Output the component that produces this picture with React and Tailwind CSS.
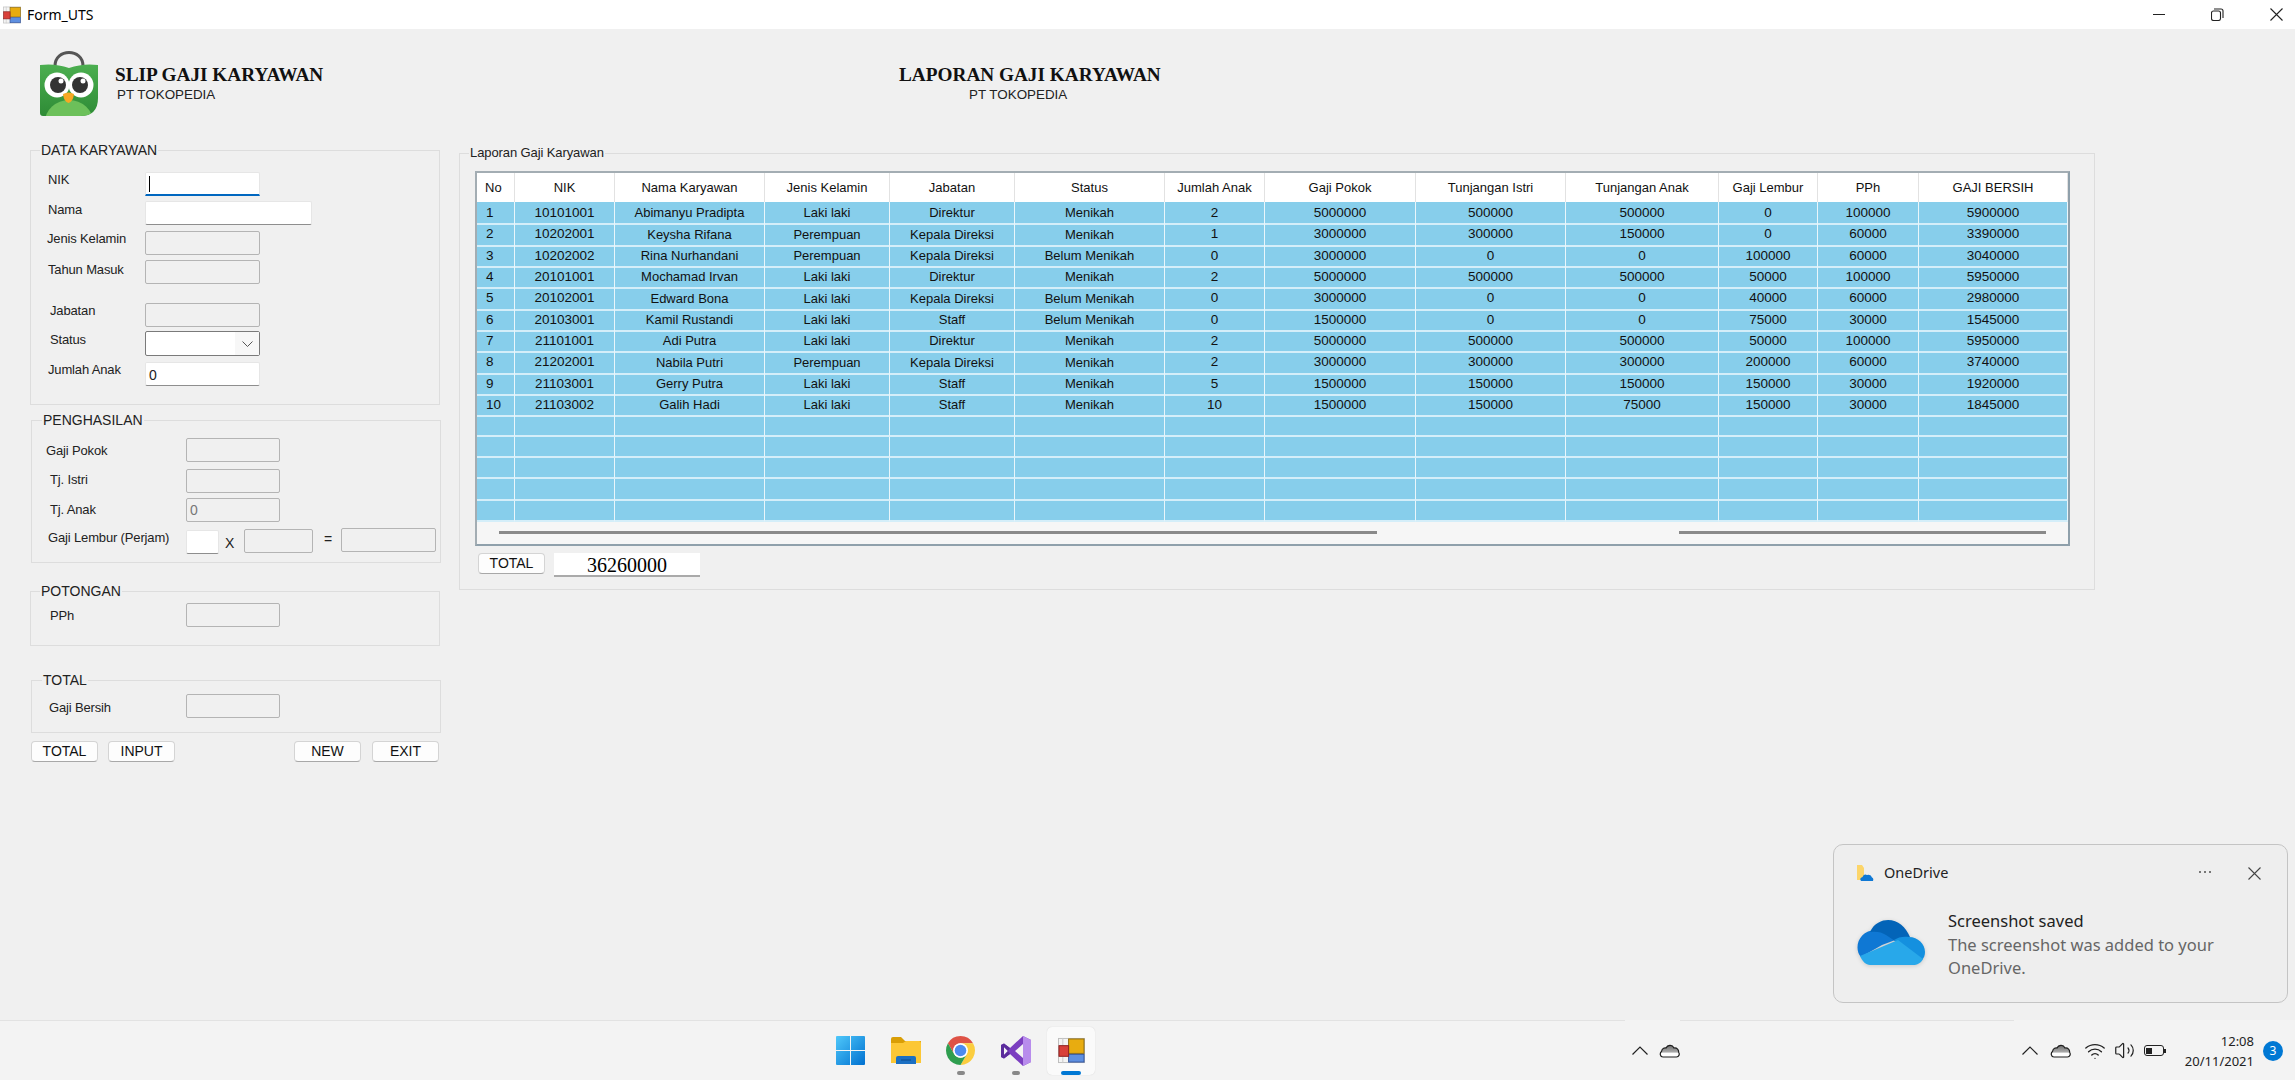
import React from "react";
import { Wifi, Volume2 } from "lucide-react";

const rows = [
  ["1","10101001","Abimanyu Pradipta","Laki laki","Direktur","Menikah","2","5000000","500000","500000","0","100000","5900000"],
  ["2","10202001","Keysha Rifana","Perempuan","Kepala Direksi","Menikah","1","3000000","300000","150000","0","60000","3390000"],
  ["3","10202002","Rina Nurhandani","Perempuan","Kepala Direksi","Belum Menikah","0","3000000","0","0","100000","60000","3040000"],
  ["4","20101001","Mochamad Irvan","Laki laki","Direktur","Menikah","2","5000000","500000","500000","50000","100000","5950000"],
  ["5","20102001","Edward Bona","Laki laki","Kepala Direksi","Belum Menikah","0","3000000","0","0","40000","60000","2980000"],
  ["6","20103001","Kamil Rustandi","Laki laki","Staff","Belum Menikah","0","1500000","0","0","75000","30000","1545000"],
  ["7","21101001","Adi Putra","Laki laki","Direktur","Menikah","2","5000000","500000","500000","50000","100000","5950000"],
  ["8","21202001","Nabila Putri","Perempuan","Kepala Direksi","Menikah","2","3000000","300000","300000","200000","60000","3740000"],
  ["9","21103001","Gerry Putra","Laki laki","Staff","Menikah","5","1500000","150000","150000","150000","30000","1920000"],
  ["10","21103002","Galih Hadi","Laki laki","Staff","Menikah","10","1500000","150000","75000","150000","30000","1845000"],
  ...Array.from({ length: 5 }, () => Array(13).fill("")),
];
const headers = ["No","NIK","Nama Karyawan","Jenis Kelamin","Jabatan","Status","Jumlah Anak","Gaji Pokok","Tunjangan Istri","Tunjangan Anak","Gaji Lembur","PPh","GAJI BERSIH"];
const gridCols = "grid grid-cols-[38px_100px_150px_125px_125px_150px_100px_151px_150px_153px_99px_101px_149px]";
const mixedCols = [2, 3, 4, 5];

function Group({ title, className, legendClass = "ml-[9px] text-[14px]", children }) {
  return (
    <fieldset className={`border border-[#dddddd] ${className}`}>
      <legend className={`${legendClass} px-px h-[18px] leading-[18px] text-[#222222]`}>{title}</legend>
      {children}
    </fieldset>
  );
}

const Off = ({ className = "w-[94px]", children }) => (
  <div className={`h-[24px] shrink-0 rounded-[2px] border border-[#b4b4b4] bg-[#f0f0f0] pl-[3px] leading-[22px] text-[#777777] ${className}`}>{children}</div>
);
const On = ({ className = "w-[115px]", children }) => (
  <div className={`h-[24px] shrink-0 rounded-[2px] border border-[#e6e6e6] border-b-[#8e8e8e] bg-white pl-[3px] leading-[24px] text-[#222222] ${className}`}>{children}</div>
);

function Row({ label, mt, lc, children }) {
  return (
    <div className={`flex h-[24px] ${mt}`}>
      <span className={`shrink-0 text-[13px] leading-[18px] tracking-[-0.150px] whitespace-nowrap text-[#222222] ${lc}`}>{label}</span>
      {children}
    </div>
  );
}

const Btn = ({ className, children }) => (
  <div className={`flex h-[21px] w-[67px] items-center justify-center rounded-[4px] border border-[#d4d4d4] border-b-[#a8a8a8] bg-[#fdfdfd] text-[#111111] ${className}`}>{children}</div>
);

function Logo() {
  return (
    <svg width="58" height="66" viewBox="0 0 58 66" className="shrink-0">
      <defs>
        <linearGradient id="bagG" x1="0" y1="0" x2="0" y2="1">
          <stop offset="0" stopColor="#4caf50" />
          <stop offset="1" stopColor="#2e8b36" />
        </linearGradient>
        <clipPath id="bagC">
          <path d="M0 15Q15 13 29 18Q43 13 58 15L58 48Q58 66 40 66L3 66Q0 66 0 63Z" />
        </clipPath>
      </defs>
      <path d="M15 16C15 -2 43 -2 43 16" fill="none" stroke="#555555" strokeWidth="3" />
      <path d="M0 15Q15 13 29 18Q43 13 58 15L58 48Q58 66 40 66L3 66Q0 66 0 63Z" fill="url(#bagG)" />
      <g clipPath="url(#bagC)">
        <ellipse cx="29" cy="72" rx="24" ry="22" fill="#6cc05a" />
      </g>
      <circle cx="17" cy="35" r="12.500" fill="#ffffff" />
      <circle cx="41" cy="35" r="12.500" fill="#ffffff" />
      <circle cx="18" cy="35" r="8" fill="#333333" />
      <circle cx="40" cy="35" r="8" fill="#333333" />
      <circle cx="21" cy="31" r="2.500" fill="#ffffff" />
      <circle cx="43" cy="31" r="2.500" fill="#ffffff" />
      <path d="M23 44Q28.500 41 34 44Q33 52 28.500 53Q24 52 23 44Z" fill="#f7a823" />
    </svg>
  );
}

function AppIcon({ size = 18 }) {
  return (
    <svg width={size} height={size} viewBox="0 0 28 26">
      <rect x="0.500" y="0.500" width="27" height="25" fill="#f4f4f4" stroke="#bdbdbd" />
      <path d="M0 8H11M0 19H11M5 0V26M11 0V26" stroke="#c8c8c8" />
      <rect x="11" y="1" width="16" height="15" fill="#e8ac10" stroke="#8c6a10" />
      <rect x="11" y="17" width="16" height="8" fill="#5e8fe0" stroke="#33549a" />
      <rect x="1" y="8" width="10" height="11" fill="#d8403a" stroke="#8f2020" />
    </svg>
  );
}

function WinLogo() {
  return (
    <svg width="29" height="29" viewBox="0 0 29 29">
      <defs>
        <linearGradient id="winG" x1="0" y1="0" x2="1" y2="1">
          <stop offset="0" stopColor="#4fc8fa" />
          <stop offset="1" stopColor="#0070d0" />
        </linearGradient>
      </defs>
      <path d="M0 1Q0 0 1 0H14V14H0ZM15 0H28Q29 0 29 1V14H15ZM0 15H14V29H1Q0 29 0 28ZM15 15H29V28Q29 29 28 29H15Z" fill="url(#winG)" />
    </svg>
  );
}

function Folder() {
  return (
    <svg width="30" height="27" viewBox="0 0 30 27">
      <path d="M0 2Q0 0 2 0H10L14 4H30V8H0Z" fill="#d99e06" />
      <path d="M0 6H12L15 4H28Q30 4 30 6V26H0Z" fill="#fcc735" />
      <path d="M5 21Q5 19 7 19H23Q25 19 25 21V27H5Z" fill="#1b6fc2" />
      <path d="M10 23H20" stroke="#0b4a8c" strokeWidth="1" />
    </svg>
  );
}

function Chrome() {
  return (
    <svg width="29" height="29" viewBox="4 4 40 40">
      <path d="M24 4A20 20 0 0 1 41.320 14L24 14A10 10 0 0 0 15.340 29L6.680 14A20 20 0 0 1 24 4Z" fill="#de5246" />
      <path d="M41.320 14A20 20 0 0 1 24 44L32.660 29A10 10 0 0 0 24 14Z" fill="#fbcd3f" />
      <path d="M6.680 14L15.340 29A10 10 0 0 0 32.660 29L24 44A20 20 0 0 1 6.680 14Z" fill="#2f9e4f" />
      <circle cx="24" cy="24" r="10" fill="#ffffff" />
      <circle cx="24" cy="24" r="8" fill="#4c8bf0" />
    </svg>
  );
}

function VS() {
  return (
    <svg width="30" height="30" viewBox="0 0 30 30">
      <path fillRule="evenodd" d="M22 0L30 4V26L22 30L9 18L3 22.500L0 21V9L3 7.500L9 12ZM22 8L14 15L22 22ZM3 11V19L7 15Z" fill="#7b3ec0" />
      <path d="M22 0L30 4V26L22 30V22V8Z" fill="#b88cec" />
      <path fillRule="evenodd" d="M3 7.500L0 9V21L3 22.500L9 18L7 15L3 19V11L7 15L9 12Z" fill="#5b2c9c" />
    </svg>
  );
}

function BigCloud() {
  return (
    <svg width="69" height="45" viewBox="0 0 69 45" className="shrink-0 drop-shadow-sm">
      <path d="M5 37C-3 28 3 10 20 10C24 10 28 11 32 14L42 19L26 25Z" fill="#0f78d4" />
      <path d="M14 12C18 3 26 0 32 0C42 0 50 7 54 17L42 23L30 15C26 12 20 11 14 12Z" fill="#0364b8" />
      <path d="M38 20C42 17 48 16 53 17C62 17 69 24 69 32C69 35 68 38 66 40L50 30Z" fill="#1490df" />
      <path d="M4 36L42 20L67 39C65 43 61 45 57 45L14 45C10 45 6 41 4 36Z" fill="#28a8ea" />
    </svg>
  );
}

function SmallOneDrive() {
  return (
    <svg width="18" height="18" viewBox="0 0 18 18" className="shrink-0">
      <path d="M1 1H6L8 4V16H1Z" fill="#fcd56a" />
      <path d="M5 17Q3 14 6.500 13Q8 9.500 11 11Q15 10 16 13.500Q18 14.500 17 17Z" fill="#0f78d4" />
    </svg>
  );
}

function TrayCloud() {
  return (
    <svg width="21" height="14" viewBox="0 0 21 14" className="shrink-0">
      <defs>
        <linearGradient id="trayG" x1="0" y1="0" x2="0" y2="1">
          <stop offset="0" stopColor="#6e6e6e" />
          <stop offset="0.550" stopColor="#a8a8a8" />
          <stop offset="0.700" stopColor="#ffffff" />
        </linearGradient>
      </defs>
      <path d="M4 13C1 13 0.500 9 2.500 7.500C3 4 6 3.500 7 4C8.500 1 13 0 15 4C18 3.500 20 6 19.500 8C21 10 20 13 17.500 13Z" fill="url(#trayG)" stroke="#1c1c1c" strokeWidth="1.200" />
    </svg>
  );
}

const Chevron = () => (
  <svg width="16" height="9" viewBox="0 0 16 9" className="shrink-0">
    <path d="M0.500 8.500L8 1L15.500 8.500" fill="none" stroke="#222222" strokeWidth="1.200" />
  </svg>
);

const Cross = ({ size = 13, color = "#444444" }) => (
  <svg width={size} height={size} viewBox="0 0 13 13" className="shrink-0">
    <path d="M0.500 0.500L12.500 12.500M12.500 0.500L0.500 12.500" stroke={color} strokeWidth="1.100" fill="none" />
  </svg>
);

function Notification() {
  return (
    <div className="absolute left-[1833px] top-[844px] h-[159px] w-[455px] rounded-[10px] border border-[#c4c4c4] bg-[#eeeeee] font-['Noto_Sans',sans-serif]">
      <div className="mt-[18px] flex h-[20px] items-center pl-[22px]">
        <SmallOneDrive />
        <span className="ml-[10px] text-[14.500px] text-[#222222]">OneDrive</span>
        <span className="mb-[2px] ml-[251px] flex gap-[3px]">
          <i className="size-[2px] bg-[#777777]" />
          <i className="size-[2px] bg-[#777777]" />
          <i className="size-[2px] bg-[#777777]" />
        </span>
        <span className="ml-[37px] flex">
          <Cross />
        </span>
      </div>
      <div className="mt-[26px] flex pl-[22px]">
        <div className="mt-[11px]">
          <BigCloud />
        </div>
        <div className="ml-[23px] text-[16.500px] leading-[23.500px]">
          <div className="text-[#222222]">Screenshot saved</div>
          <div className="w-[300px] text-[#666666]">The screenshot was added to your OneDrive.</div>
        </div>
      </div>
    </div>
  );
}

function Taskbar() {
  return (
    <footer className="flex h-[60px] shrink-0 flex-col bg-[#f3f3f3]">
      <div className="flex h-px shrink-0">
        <div className="w-[1625px] bg-[#e2e2e2]" />
        <div className="w-[55px]" />
        <div className="w-[334px] bg-[#e2e2e2]" />
      </div>
      <div className="flex flex-1 items-center pl-[823px] pr-[12px]">
        <div className="flex w-[55px] justify-center"><WinLogo /></div>
        <div className="flex w-[55px] justify-center"><Folder /></div>
        <div className="relative flex w-[55px] justify-center">
          <Chrome />
          <i className="absolute bottom-[-10px] left-[24px] h-[4px] w-[8px] rounded-full bg-[#888888]" />
        </div>
        <div className="relative flex w-[55px] justify-center">
          <VS />
          <i className="absolute bottom-[-9px] left-[24px] h-[4px] w-[8px] rounded-full bg-[#888888]" />
        </div>
        <div className="relative ml-[4px] flex h-[48px] w-[48px] items-center justify-center rounded-[5px] bg-[#fafafa] shadow-[0_0_1px_#cccccc]">
          <AppIcon size={27} />
          <i className="absolute bottom-[0px] left-[14px] h-[4px] w-[20px] rounded-full bg-[#0078d4]" />
        </div>
        <div className="ml-[537px] flex items-center gap-[11px]">
          <Chevron />
          <TrayCloud />
        </div>
        <div className="ml-auto flex items-center">
          <Chevron />
          <div className="ml-[12px]"><TrayCloud /></div>
          <Wifi size={22} strokeWidth={1.500} className="ml-[13px] text-[#222222]" />
          <Volume2 size={21} strokeWidth={1.400} className="ml-[8px] text-[#222222]" />
          <div className="ml-[9px] flex h-[11px] w-[20px] items-center rounded-[3px] border border-[#222222] p-[1.500px]">
            <i className="h-full w-[6px] bg-[#222222]" />
          </div>
          <i className="h-[4px] w-[2px] bg-[#222222]" />
          <div className="ml-[19px] text-right font-['Noto_Sans',sans-serif] text-[13px] leading-[20px] text-[#222222]">
            <div>12:08</div>
            <div>20/11/2021</div>
          </div>
          <div className="ml-[9px] flex size-[20px] items-center justify-center rounded-full bg-[#0078d4] font-['Noto_Sans',sans-serif] text-[12px] text-white">3</div>
        </div>
      </div>
    </footer>
  );
}

function LeftColumn() {
  return (
    <section className="w-[441px] shrink-0 pl-[30px]">
      <header className="flex h-[112px] pl-[10px] pt-[21px]">
        <Logo />
        <div className="ml-[17px] mt-[15px]">
          <h1 className="h-[20px] whitespace-nowrap font-['Liberation_Serif',serif] text-[19.250px] font-bold leading-[20px] text-[#111111]">SLIP GAJI KARYAWAN</h1>
          <p className="ml-[2px] mt-[2px] text-[13.400px] leading-[16px] text-[#222222]">PT TOKOPEDIA</p>
        </div>
      </header>

      <Group title="DATA KARYAWAN" className="h-[264px] w-[410px]">
        <Row label="NIK" mt="mt-[13px]" lc="w-[114px] pl-[17px] -mt-[1px]">
          <div className="flex h-[24px] w-[115px] shrink-0 items-center rounded-t-[2px] border border-[#e6e6e6] border-b-2 border-b-[#0067c0] bg-white pl-[3px]">
            <i className="h-[16px] w-px bg-black" />
          </div>
        </Row>
        <Row label="Nama" mt="mt-[5px]" lc="w-[114px] pl-[17px]"><On className="w-[167px]" /></Row>
        <Row label="Jenis Kelamin" mt="mt-[6px]" lc="w-[114px] pl-[16px] -mt-[1px]"><Off className="w-[115px]" /></Row>
        <Row label="Tahun Masuk" mt="mt-[5px]" lc="w-[114px] pl-[17px] mt-[1px]"><Off className="w-[115px]" /></Row>
        <Row label="Jabatan" mt="mt-[19px]" lc="w-[114px] pl-[19px] -mt-[1px]"><Off className="w-[115px]" /></Row>
        <Row label="Status" mt="mt-[4px]" lc="w-[114px] pl-[19px]">
          <div className="flex h-[25px] w-[115px] shrink-0 rounded-[2px] border border-[#7a7a7a] bg-white">
            <div className="flex-1" />
            <div className="flex w-[24px] items-center justify-center bg-[#f7f7f7]">
              <svg width="11" height="6" viewBox="0 0 11 6"><path d="M0.500 0.500L5.500 5.500L10.500 0.500" fill="none" stroke="#555555" /></svg>
            </div>
          </div>
        </Row>
        <Row label="Jumlah Anak" mt="mt-[7px]" lc="w-[114px] pl-[17px] -mt-[1px]"><On>0</On></Row>
      </Group>

      <Group title="PENGHASILAN" className="ml-px mt-[6px] h-[152px] w-[410px]" legendClass="ml-[10px] text-[14px]">
        <Row label="Gaji Pokok" mt="mt-[9px]" lc="w-[154px] pl-[14px] mt-[4px]"><Off /></Row>
        <Row label="Tj. Istri" mt="mt-[7px]" lc="w-[154px] pl-[18px] mt-[2px]"><Off /></Row>
        <Row label="Tj. Anak" mt="mt-[5px]" lc="w-[154px] pl-[18px] mt-[3px]"><Off>0</Off></Row>
        <Row label="Gaji Lembur (Perjam)" mt="mt-[7px]" lc="w-[154px] pl-[16px]">
          <On className="mt-px w-[33px]" />
          <span className="ml-[6px] mt-[5px] w-[14px] shrink-0 leading-[18px] text-[#222222]">X</span>
          <Off className="ml-[5px] w-[69px]" />
          <span className="ml-[11px] mt-[1px] w-[8px] shrink-0 leading-[18px] text-[#222222]">=</span>
          <Off className="ml-[9px] -mt-px w-[95px]" />
        </Row>
      </Group>

      <Group title="POTONGAN" className="mt-[19px] h-[64px] w-[410px]">
        <Row label="PPh" mt="mt-[3px]" lc="w-[155px] pl-[19px] mt-[4px]"><Off /></Row>
      </Group>

      <Group title="TOTAL" className="ml-px mt-[25px] h-[62px] w-[410px]" legendClass="ml-[10px] text-[14px]">
        <Row label="Gaji Bersih" mt="mt-[5px]" lc="w-[154px] pl-[17px] mt-[5px]"><Off /></Row>
      </Group>

      <div className="ml-px mt-[8px] flex w-[408px]">
        <Btn>TOTAL</Btn>
        <Btn className="ml-[10px]">INPUT</Btn>
        <Btn className="ml-auto">NEW</Btn>
        <Btn className="ml-[11px]">EXIT</Btn>
      </div>
    </section>
  );
}

function GridTable() {
  return (
    <div className="ml-[15px] mt-[9px] h-[375px] w-[1595px] border-2 border-[#a3adb3] border-b-[#8fa0ab] border-r-[#8fa0ab]">
      <div className={`${gridCols} h-[29px] bg-white`}>
        {headers.map((h, i) => (
          <div key={h} className={`flex items-center border-r border-[#e2e2e2] text-[13px] text-[#111111] ${i === 0 ? "pl-[8px]" : "justify-center"}`}>{h}</div>
        ))}
      </div>
      {rows.map((r, ri) => (
        <div key={ri} className={`${gridCols} h-[21.330px] bg-[#87ceeb]`}>
          {r.map((c, i) => (
            <div key={i} className={`flex items-center border-r border-b-2 border-r-[#e9f6fb] border-b-[#d4eef9] pt-px text-[#111111] ${mixedCols.includes(i) ? "text-[13px]" : "text-[13.500px]"} ${i === 0 ? "pl-[9px]" : "justify-center"}`}>{c}</div>
          ))}
        </div>
      ))}
      <div className="flex h-[22px] items-center bg-[#f6f6f6] pl-[22px]">
        <i className="h-[3px] w-[878px] bg-[#8a8a8a]" />
        <i className="ml-[302px] h-[3px] w-[367px] bg-[#8a8a8a]" />
      </div>
    </div>
  );
}

function RightColumn() {
  return (
    <section className="ml-[18px] w-[1636px] shrink-0">
      <header className="h-[115px] pt-[36px]">
        <h1 className="ml-[440px] h-[20px] whitespace-nowrap font-['Liberation_Serif',serif] text-[19.250px] font-bold leading-[20px] text-[#111111]">LAPORAN GAJI KARYAWAN</h1>
        <p className="ml-[510px] mt-[2px] text-[13.400px] leading-[16px] text-[#222222]">PT TOKOPEDIA</p>
      </header>
      <Group title="Laporan Gaji Karyawan" className="h-[446px] w-[1636px]" legendClass="ml-[9px] text-[13px] tracking-[-0.100px]">
        <GridTable />
        <div className="ml-[18px] mt-[7px] flex">
          <Btn className="h-[20px]">TOTAL</Btn>
          <div className="ml-[9px] flex h-[24px] w-[146px] items-end justify-center border-b-2 border-[#aaaaaa] bg-white font-['Liberation_Serif',serif] text-[20px] leading-[20px] text-black">36260000</div>
        </div>
      </Group>
    </section>
  );
}

export default function App() {
  return (
    <div className="relative flex h-[1080px] w-[2295px] flex-col overflow-hidden bg-[#f0f0f0] font-['Liberation_Sans',sans-serif] text-[14px]">
      <div className="flex h-[29px] shrink-0 items-center bg-white pl-[3px]">
        <AppIcon size={18} />
        <span className="ml-[6px] font-['Noto_Sans',sans-serif] text-[14px] text-black">Form_UTS</span>
        <div className="ml-auto flex items-center pr-[12px]">
          <i className="h-px w-[12px] bg-[#222222]" />
          <svg width="13" height="13" viewBox="0 0 13 13" className="ml-[46px]">
            <rect x="0.500" y="3" width="9" height="9.500" rx="2" fill="none" stroke="#222222" strokeWidth="1.100" />
            <path d="M3 1H10Q12 1 12 3V10" fill="none" stroke="#222222" strokeWidth="1.100" />
          </svg>
          <span className="ml-[46px] flex"><Cross color="#222222" /></span>
        </div>
      </div>
      <main className="flex flex-1">
        <LeftColumn />
        <RightColumn />
      </main>
      <Taskbar />
      <Notification />
    </div>
  );
}
